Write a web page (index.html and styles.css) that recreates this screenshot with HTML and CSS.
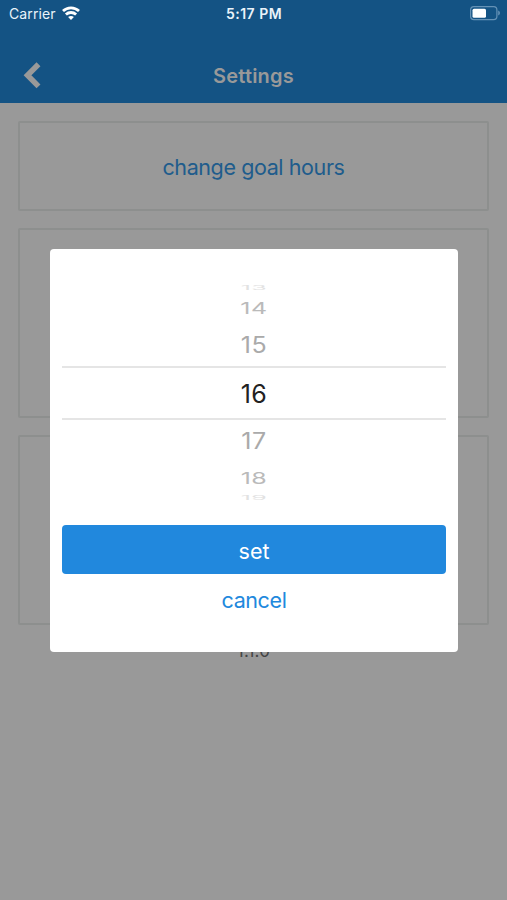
FILE: index.html
```
<!DOCTYPE html>
<html lang="en">
<head>
<meta charset="utf-8">
<title>Settings</title>
<link rel="stylesheet" href="styles.css">
</head>
<body>
<div class="screen">
  <header class="header">
    <div class="status">
      <div class="carrier"><span class="carrier-name">Carrier</span>
        <svg class="wifi" width="18" height="14" viewBox="0 0 18 14" fill="none" stroke="#fff" stroke-width="2.8"><path d="M1 5.100C5.500.9 12.500.9 17 5.100"/><path d="M3.900 8.500c2.900-2.700 7.300-2.700 10.200 0"/><path d="M9 14 6.100 11c1.700-1.500 4.100-1.500 5.800 0z" fill="#fff" stroke="none"/></svg>
      </div>
      <time class="clock">5:17 PM</time>
      <svg class="battery" width="31" height="15" viewBox="0 0 31 15"><rect x=".6" y=".6" width="26.300" height="13" rx="3.300" fill="none" stroke="#6592b6" stroke-width="1.200"/><rect x="2.500" y="2.700" width="13.500" height="9" rx="1.500" fill="#fff"/><path d="M28.200 4.600c2.300 1 2.300 4 0 5z" fill="#6592b6"/></svg>
    </div>
    <div class="nav">
      <svg class="back" width="18" height="27" viewBox="0 0 18 27" fill="none" stroke="#999" stroke-width="5.500"><path d="M15.500 2.200 4.500 13.300 15.500 24.400"/></svg>
      <h1 class="title">Settings</h1>
    </div>
  </header>
  <main class="content">
    <section class="card card-goal"><span class="link">change goal hours</span></section>
    <section class="card"></section>
    <section class="card"></section>
    <p class="version">1.1.0</p>
  </main>
  <div class="modal">
    <div class="wheel">
      <div class="row r13"><span>13</span></div>
      <div class="row r14"><span>14</span></div>
      <div class="row r15"><span>15</span></div>
      <div class="row r16"><span>16</span></div>
      <div class="row r17"><span>17</span></div>
      <div class="row r18"><span>18</span></div>
      <div class="row r19"><span>19</span></div>
    </div>
    <button class="set">set</button>
    <button class="cancel">cancel</button>
  </div>
</div>
</body>
</html>
```
FILE: styles.css
```
* { box-sizing: border-box; }
body { margin: 0; font-family: Inter, "Liberation Sans", sans-serif; }
.screen { position: relative; width: 507px; height: 900px; background: #999; overflow: hidden; }
.header { height: 103px; background: #145384; }
.status { display: grid; grid-template-columns: 1fr auto 1fr; height: 27px; padding: 0 6px 0 9px; align-items: center; color: #eaf3fa; }
.carrier { display: flex; align-items: center; gap: 6px; }
.carrier-name { font-size: 14px; letter-spacing: .1px; }
.wifi { margin-top: -2px; }
.clock { font-weight: 600; font-size: 14px; letter-spacing: .5px; margin-left: -2px; }
.battery { justify-self: end; margin-top: -1px; }
.nav { display: grid; grid-template-columns: 1fr auto 1fr; height: 76px; padding: 0 23px; }
.back { margin-top: 35px; }
.title { margin: 0; grid-column: 2; color: #999; font-size: 20px; line-height: 48px; font-weight: 600; letter-spacing: .2px; padding-top: 25px; }
.content { display: flex; flex-direction: column; gap: 17px; padding: 18px 18px 0; }
.card { height: 190px; border: 2px solid #8d8f8e; border-radius: 2px; }
.card-goal { display: flex; height: 90px; align-items: center; justify-content: center; }
.link { font-size: 21.5px; letter-spacing: -.4px; color: #205c8c; padding-top: 2px; }
.version { margin: 0; text-align: center; color: #444; font-size: 17px; line-height: 18px; letter-spacing: .2px; }
.modal { position: absolute; left: 50px; top: 249px; width: 408px; height: 403px; padding: 35px 12px 0; background: #fff; border-radius: 4px; display: flex; flex-direction: column; }
.wheel { height: 241px; display: flex; flex-direction: column; overflow: hidden; }
.row { display: flex; align-items: center; justify-content: center; font-size: 25px; line-height: 30px; flex: none; color: #aaa; }
.row span { display: block; letter-spacing: .5px; transform-origin: center; }
.r13, .r19 { height: 8px; overflow: hidden; color: #e2e2e2; }
.r13 span, .r19 span { transform: scaleY(.23); }
.r14 { height: 32px; color: #bababa; }
.r14 span, .r18 span { transform: scaleY(.65); }
.r15 { height: 42px; }
.r15 span, .r17 span { transform: scaleY(.9); }
.r16 { height: 54px; padding-top: 1px; border-top: 2px solid #e5e5e5; border-bottom: 2px solid #e5e5e5; color: #222; }
.r17 { height: 42px; }
.r18 { height: 32px; color: #bababa; }
button { border: 0; padding: 0; font: 21.5px/49px Inter, sans-serif; }
.set { height: 49px; padding-top: 2px; background: #2188dd; color: #fff; border-radius: 4px; }
.cancel { height: 53px; background: none; color: #2188dd; line-height: 53px; letter-spacing: -.4px; }
```
